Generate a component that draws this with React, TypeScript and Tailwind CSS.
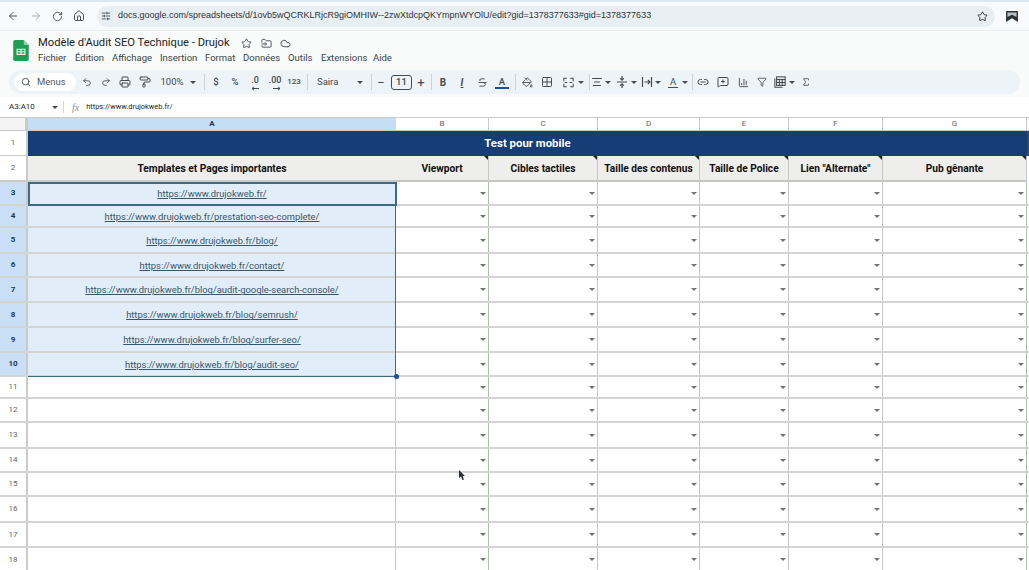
import { ArrowLeft, ArrowRight, RotateCw, Home, SlidersHorizontal, Star, Search, Undo2, Redo2, Printer, PaintRoller, Strikethrough, PaintBucket, Grid2x2, AlignCenter, Link2, MessageSquarePlus, ChartColumn, Filter, Sigma, FolderInput, Cloud } from 'lucide-react';

const sans = "font-['Roboto','Liberation_Sans',sans-serif]";
const sheet = "font-['Roboto','Noto_Sans',sans-serif]";

const menus = [
    { label: 'Fichier', className: 'w-[37px]' },
    { label: 'Édition', className: 'w-[37px]' },
    { label: 'Affichage', className: 'w-[48px]' },
    { label: 'Insertion', className: 'w-[45px]' },
    { label: 'Format', className: 'w-[38px]' },
    { label: 'Données', className: 'w-[45px]' },
    { label: 'Outils', className: 'w-[33px]' },
    { label: 'Extensions', className: 'w-[52px]' },
    { label: 'Aide', className: 'w-[30px]' },
];

const topRows = [
    { n: 3, url: 'https://www.drujokweb.fr/', h: 'h-[24px]' },
    { n: 4, url: 'https://www.drujokweb.fr/prestation-seo-complete/', h: 'h-[22px]' },
    { n: 5, url: 'https://www.drujokweb.fr/blog/', h: 'h-[26px]' },
    { n: 6, url: 'https://www.drujokweb.fr/contact/', h: 'h-[24px]' },
    { n: 7, url: 'https://www.drujokweb.fr/blog/audit-google-search-console/', h: 'h-[25px]' },
    { n: 8, url: 'https://www.drujokweb.fr/blog/semrush/', h: 'h-[25px]' },
    { n: 9, url: 'https://www.drujokweb.fr/blog/surfer-seo/', h: 'h-[25px]' },
    { n: 10, url: 'https://www.drujokweb.fr/blog/audit-seo/', h: 'h-[24px]' },
];

const emptyRows = [
    { n: 11, h: 'h-[22px]' },
    { n: 12, h: 'h-[24px]' },
    { n: 13, h: 'h-[26px]' },
    { n: 14, h: 'h-[24px]' },
    { n: 15, h: 'h-[24px]' },
    { n: 16, h: 'h-[26px]' },
    { n: 17, h: 'h-[25px]' },
    { n: 18, h: 'h-[25px]' },
];

const columns = [
    { label: 'B', title: 'Viewport', line: 'border-r-[#a9c4a9]' },
    { label: 'C', title: 'Cibles tactiles', line: 'border-r-[#c4c7c5]' },
    { label: 'D', title: 'Taille des contenus', line: 'border-r-[#c4c7c5]' },
    { label: 'E', title: 'Taille de Police', line: 'border-r-[#c4c7c5]' },
    { label: 'F', title: 'Lien "Alternate"', line: 'border-r-[#c4c7c5]' },
    { label: 'G', title: 'Pub gênante', line: 'border-r-[#a9c4a9]' },
];

const gridCols = 'grid grid-cols-[28px_368px_93px_109px_102px_89px_94px_144px_2px]';
const icon = 'text-[#444c52]';

function Caret({ className = '' }: { className?: string }) {
    return (
        <span className={`flex h-[14px] w-[8px] shrink-0 items-center justify-center ${className}`}>
            <span className="h-0 w-0 border-x-[3px] border-t-[3px] border-x-transparent border-t-[#444c52]" />
        </span>
    );
}

function Sep({ className = '' }: { className?: string }) {
    return <span className={`h-[16px] w-px shrink-0 bg-[#c9d2d6] ${className}`} />;
}

function Cell({ className = '', children }: { className?: string; children: React.ReactNode }) {
    return <span className={`flex shrink-0 items-center justify-center whitespace-nowrap ${className}`}>{children}</span>;
}

function DropCells() {
    return (
        <>
            {columns.map((c) => (
                <div key={c.label} className={`flex items-center justify-end border-r ${c.line} pr-[2px]`}>
                    <span className="h-0 w-0 border-x-[3px] border-t-[3px] border-x-transparent border-t-[#6f7375]" />
                </div>
            ))}
        </>
    );
}

function MergeIcon() {
    return (
        <svg width="11" height="11" viewBox="0 0 13 13" fill="none" stroke="#444c52" strokeWidth="1.2">
            <path d="M1 5V1.5h3.5M8.5 1.5H12V5M1 8v3.5h3.5M8.5 11.5H12V8M2 6.5h3M11 6.5H8" />
        </svg>
    );
}

function VAlignIcon() {
    return (
        <svg width="12" height="14" viewBox="0 0 12 14" fill="none" stroke="#444c52" strokeWidth="1.2">
            <path d="M1 7h10M6 1v4M4.2 3.4 6 5.2l1.8-1.8M6 13V9M4.2 10.6 6 8.8l1.8 1.8" />
        </svg>
    );
}

function WrapIcon() {
    return (
        <svg width="12" height="12" viewBox="0 0 12 12" fill="none" stroke="#444c52" strokeWidth="1.2">
            <path d="M1.5 1v10M10.5 1v10M3.5 6H9M6.8 3.8 9 6 6.8 8.2" />
        </svg>
    );
}

function DecimalIcon({ label, rtl }: { label: string; rtl: boolean }) {
    return (
        <span className="relative flex h-[14px] items-center text-[9px] font-medium text-[#444c52]">
            <span className="-mt-[3px]">{label}</span>
            <svg className="absolute -bottom-[2px] right-0" width="8" height="5" viewBox="0 0 8 5" fill="none" stroke="#444c52" strokeWidth="1">
                <path d={rtl ? 'M8 2.5H1M3 .8 1 2.5l2 1.7' : 'M0 2.5h7M5 .8l2 1.7-2 1.7'} />
            </svg>
        </span>
    );
}

function CalcIcon() {
    return (
        <svg width="12" height="12" viewBox="0 0 14 14" fill="none" stroke="#444c52" strokeWidth="1.2">
            <path d="M1 3v10h9" />
            <rect x="3" y="1" width="10" height="10" fill="#e4eaed" />
            <path d="M3 4h10M6.3 4v7M9.6 4v7M3 7.5h10" />
        </svg>
    );
}

function SheetsLogo() {
    return (
        <svg width="16" height="21" viewBox="0 0 17 23">
            <path d="M2 0h9.5L17 5.5V21a2 2 0 0 1-2 2H2a2 2 0 0 1-2-2V2a2 2 0 0 1 2-2Z" fill="#1f9d55" />
            <path d="M11.5 0 17 5.5h-4a1.5 1.5 0 0 1-1.5-1.5Z" fill="#8ed1a8" />
            <path d="M3.6 9.5h9.8v6.8H3.6Zm1.2 1.2v1.6h3.1v-1.6Zm4.3 0v1.6h3.1v-1.6Zm-4.3 2.8v1.6h3.1v-1.6Zm4.3 0v1.6h3.1v-1.6Z" fill="#f1f5f1" fillRule="evenodd" />
        </svg>
    );
}

function BookmarkSwatch() {
    return (
        <svg width="12" height="11" viewBox="0 0 13 12">
            <rect width="13" height="12" rx="1" fill="#2d3236" />
            <path d="M1.5 1.5h10v5L6.5 4 1.5 6.5Z" fill="#b9c0c4" />
            <path d="M0 12 6.5 8 13 12Z" fill="#f5f9fb" />
        </svg>
    );
}

export default function App() {
    return (
        <div className={`relative flex h-[570px] w-[1029px] flex-col overflow-hidden bg-white ${sans}`}>
            <div className="h-[2px] shrink-0 bg-[#dbe8f2]" />

            {/* browser bar */}
            <div className="flex h-[28px] shrink-0 items-center bg-[#f8fafb] pl-[7px]">
                <ArrowLeft size={12} className="text-[#4a5156]" />
                <ArrowRight size={12} className="ml-[11px] text-[#a9b0b4]" />
                <RotateCw size={11} className="ml-[10px] text-[#4a5156]" />
                <Home size={12} className="ml-[10px] text-[#4a5156]" />
                <div className="ml-[12px] flex h-[21px] w-[898px] items-center rounded-full bg-[#e8eff4] pl-[4px] pr-[7px]">
                    <SlidersHorizontal size={10} className="text-[#3b4246]" />
                    <span className="ml-[7px] flex-1 whitespace-nowrap font-['Liberation_Sans',sans-serif] text-[9px] text-[#2f3438]">
                        docs.google.com/spreadsheets/d/1ovb5wQCRKLRjcR9giOMHIW--2zwXtdcpQKYmpnWYOlU/edit?gid=1378377633#gid=1378377633
                    </span>
                    <Star size={11} className="text-[#2f3438]" />
                </div>
                <span className="ml-[11px]"><BookmarkSwatch /></span>
            </div>

            {/* title and menus */}
            <div className="flex h-[40px] shrink-0 border-t border-[#e6ecef] bg-[#f8fbfa] pl-[13px]">
                <div className="mt-[9px]"><SheetsLogo /></div>
                <div className="ml-[9px] flex flex-col">
                    <div className="mt-[5px] flex h-[15px] items-center">
                        <span className="w-[202px] whitespace-nowrap text-[11.2px] text-[#1f2326]">Modèle d'Audit SEO Technique - Drujok</span>
                        <Star size={11} className="ml-[1px] text-[#444c52]" />
                        <FolderInput size={11} className="ml-[9px] text-[#444c52]" />
                        <Cloud size={11} className="ml-[8px] text-[#444c52]" />
                    </div>
                    <div className="flex h-[14px] items-center text-[9.5px] text-[#3b4246]">
                        {menus.map((m) => (
                            <span key={m.label} className={`whitespace-nowrap ${m.className}`}>{m.label}</span>
                        ))}
                    </div>
                </div>
            </div>

            {/* toolbar */}
            <div className="flex h-[27px] shrink-0 bg-[#f8fbfa] pl-[9px] pr-[9px]">
                <div className="flex h-[24px] w-full items-center rounded-[12px] bg-[#edf3f6] pl-[5px] text-[#444c52]">
                    <div className="flex h-[18px] w-[62px] shrink-0 items-center rounded-full bg-white pl-[7px] text-[9.5px] text-[#555c61]">
                        <Search size={10} className="text-[#3b4246]" />
                        <span className="ml-[6px]">Menus</span>
                    </div>
                    <Cell className="ml-[3px] w-[16px]"><Undo2 size={10} className={icon} /></Cell>
                    <Cell className="ml-[3px] w-[16px]"><Redo2 size={10} className={icon} /></Cell>
                    <Cell className="ml-[3px] w-[16px]"><Printer size={12} className={icon} /></Cell>
                    <Cell className="ml-[4px] w-[16px]"><PaintRoller size={12} className={icon} /></Cell>
                    <Cell className="ml-[8px] w-[22px] text-[9.5px]">100%</Cell>
                    <Caret className="ml-[6px]" />
                    <Sep className="ml-[7px]" />
                    <Cell className="ml-[3px] w-[16px] text-[9.5px] font-medium">$</Cell>
                    <Cell className="ml-[3px] w-[16px] text-[9.5px] font-medium">%</Cell>
                    <Cell className="ml-[4px] w-[16px]"><DecimalIcon label=".0" rtl /></Cell>
                    <Cell className="ml-[4px] w-[16px]"><DecimalIcon label=".00" rtl={false} /></Cell>
                    <Cell className="ml-[3px] w-[16px] text-[8px] font-medium">123</Cell>
                    <Sep className="ml-[5px]" />
                    <span className="ml-[9px] w-[36px] shrink-0 text-[9.5px]">Saira</span>
                    <Caret className="ml-[3px]" />
                    <Sep className="ml-[7px]" />
                    <Cell className="ml-[3px] w-[12px] text-[13px] leading-none">−</Cell>
                    <Cell className="ml-[4px] h-[15px] w-[21px] rounded-[3px] border border-[#444c52] text-[9.5px] font-medium">11</Cell>
                    <Cell className="ml-[3px] w-[12px] text-[13px] leading-none">+</Cell>
                    <Sep className="ml-[4px]" />
                    <Cell className="ml-[3px] w-[16px] text-[10px] font-bold">B</Cell>
                    <Cell className="ml-[3px] w-[16px] text-[10px] font-bold italic underline">I</Cell>
                    <Cell className="ml-[4px] w-[16px]"><Strikethrough size={11} className={icon} /></Cell>
                    <Cell className="ml-[4px] w-[16px] flex-col text-[9.5px] font-medium leading-[11px]">
                        A
                        <span className="h-[2px] w-[14px] bg-[#1d4e8f]" />
                    </Cell>
                    <Sep className="ml-[5px]" />
                    <Cell className="ml-[3px] w-[16px]"><PaintBucket size={11} className={icon} /></Cell>
                    <Cell className="ml-[4px] w-[16px]"><Grid2x2 size={12} className={icon} /></Cell>
                    <Cell className="ml-[5px] w-[16px]"><MergeIcon /></Cell>
                    <Caret className="ml-px" />
                    <Sep className="ml-[4px]" />
                    <Cell className="w-[14px]"><AlignCenter size={12} className={icon} /></Cell>
                    <Caret />
                    <Cell className="ml-[3px] w-[14px]"><VAlignIcon /></Cell>
                    <Caret className="ml-px" />
                    <Cell className="ml-[2px] w-[14px]"><WrapIcon /></Cell>
                    <Caret />
                    <Cell className="ml-[4px] w-[14px] flex-col text-[9.5px] leading-[10px]">
                        A
                        <span className="h-px w-[10px] bg-[#444c52]" />
                    </Cell>
                    <Caret className="ml-px" />
                    <Sep className="ml-[3px]" />
                    <Cell className="ml-[2px] w-[16px]"><Link2 size={12} className={icon} /></Cell>
                    <Cell className="ml-[4px] w-[16px]"><MessageSquarePlus size={12} className={icon} /></Cell>
                    <Cell className="ml-[4px] w-[16px]"><ChartColumn size={11} className={icon} /></Cell>
                    <Cell className="ml-[3px] w-[16px]"><Filter size={10} className={icon} /></Cell>
                    <Cell className="ml-[3px] w-[14px]"><CalcIcon /></Cell>
                    <Caret className="ml-px" />
                    <Cell className="ml-[4px] w-[12px]"><Sigma size={10} className={icon} /></Cell>
                </div>
            </div>

            {/* formula bar */}
            <div className="flex h-[20px] shrink-0 items-center bg-white text-[8px] text-[#1f2326]">
                <span className="ml-[9px] w-[42px]">A3:A10</span>
                <Caret />
                <span className="ml-[4px] h-[12px] w-px bg-[#d4d8da]" />
                <span className="ml-[8px] font-['Liberation_Serif',serif] text-[10px] italic text-[#8a8f92]">fx</span>
                <span className="ml-[7px] text-[7.4px]">https://www.drujokweb.fr/</span>
            </div>

            {/* column letters */}
            <div className={`${gridCols} h-[14px] shrink-0 border-y border-[#c9cbc9] text-[8px] text-[#5f6368]`}>
                <div className="border-r-[3px] border-[#c9cbc9] bg-[#f3f4f3]" />
                <div className="flex items-center justify-center bg-[#c6def5] font-bold text-[#1f3550]">A</div>
                {columns.map((c) => (
                    <div key={c.label} className="flex items-center justify-center border-r border-[#c9cbc9]">{c.label}</div>
                ))}
            </div>

            {/* row 1 */}
            <div className={`${gridCols} h-[25px] shrink-0`}>
                <div className="flex items-center justify-center border-r-2 border-b border-[#c9cbc9] text-[8px] text-[#5f6368]">1</div>
                <div className={`col-span-7 flex items-center justify-center bg-[#153d76] pt-px text-[11.4px] font-bold text-white ${sheet}`}>Test pour mobile</div>
                <div className="bg-[#3b4a55]" />
            </div>

            {/* row 2 */}
            <div className={`${gridCols} h-[26px] shrink-0`}>
                <div className="flex items-center justify-center border-r-2 border-b-2 border-[#c9cbc9] text-[8px] text-[#5f6368]">2</div>
                <div className={`flex items-center justify-center border-b-2 border-[#c9cbc9] bg-[#eeeeec] pt-[2px] text-[10.2px] font-bold text-[#111] ${sheet}`}>Templates et Pages importantes</div>
                {columns.map((c) => (
                    <div key={c.label} className={`relative flex items-center justify-center border-r border-b-2 border-[#c4c7c5] bg-[#eeeeec] pt-[2px] text-[10.2px] font-bold text-[#111] ${sheet}`}>
                        {c.title}
                        <span className="absolute right-0 top-0 h-0 w-0 border-l-[4px] border-t-[4px] border-l-transparent border-t-[#222]" />
                    </div>
                ))}
                <div />
            </div>

            {/* selected range */}
            <div className="relative shrink-0">
                {topRows.map((row) => (
                    <div key={row.n} className={`${gridCols} ${row.h} border-b-2 border-[#d3d5d3]`}>
                        <div className="flex items-center justify-center border-r-2 border-[#c9cbc9] bg-[#c9dff5] text-[8px] font-bold text-[#24384f]">{row.n}</div>
                        <div className={`flex items-center justify-center bg-[#e1edf8] pt-[2px] text-[9.4px] text-[#35566e] underline ${sheet}`}>{row.url}</div>
                        <DropCells />
                    </div>
                ))}
                <div className="absolute left-[28px] top-0 h-[24px] w-[369px] border-2 border-[#3f6a86]" />
                <div className="absolute bottom-0 left-[28px] h-px w-[368px] bg-[#3f6a86]" />
                <div className="absolute left-[395px] top-0 h-full w-px bg-[#3f6a86]" />
                <div className="absolute -bottom-[2px] left-[394px] h-[5px] w-[5px] rounded-full bg-[#1d4e8f]" />
            </div>

            {/* empty rows */}
            {emptyRows.map((row) => (
                <div key={row.n} className={`${gridCols} ${row.h} shrink-0 border-b-2 border-[#d3d5d3]`}>
                    <div className="flex items-center justify-center border-r-2 border-[#c9cbc9] text-[8px] text-[#5f6368]">{row.n}</div>
                    <div className="border-r border-[#c4c7c5]" />
                    <DropCells />
                </div>
            ))}

            {/* mouse cursor */}
            <svg className="absolute left-[459px] top-[470px]" width="7" height="11" viewBox="0 0 7 11">
                <path d="M0 0v8l2-1.6L3.4 10l1.6-.6L3.6 6H6Z" fill="#2b2f33" />
            </svg>
        </div>
    );
}
